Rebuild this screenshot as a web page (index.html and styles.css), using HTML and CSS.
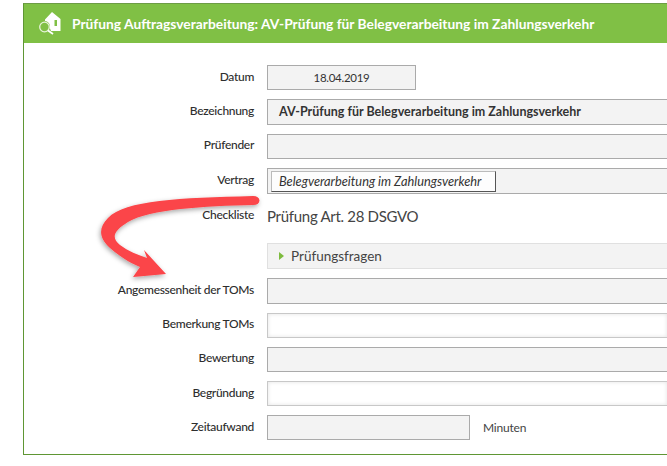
FILE: index.html
```html
<!DOCTYPE html>
<html lang="de">
<head>
<meta charset="utf-8">
<title>Prüfung Auftragsverarbeitung</title>
<link rel="stylesheet" href="styles.css">
</head>
<body>
<div class="panel">
  <header class="head">
    <svg class="logo" width="24" height="27" viewBox="38 10 24 27">
      <path fill="#fff" d="M52 12 L60.500 19 V31 H51 L50 28.500 C50.500 24 48.500 21.500 45 21 V19.500 Z"/>
      <rect x="54.500" y="20" width="2.500" height="6" fill="#80c045"/>
      <circle cx="44.500" cy="27" r="4.800" fill="none" stroke="#e6f3d8" stroke-width="1.300"/>
      <path d="M48 30.500 L53 34" stroke="#fff" stroke-width="1.800"/>
    </svg>
    <h1 class="title">Prüfung Auftragsverarbeitung: AV-Prüfung für Belegverarbeitung im Zahlungsverkehr</h1>
  </header>
  <div class="form">
    <div class="row r-datum"><label class="lbl">Datum</label><div class="box short center">18.04.2019</div></div>
    <div class="row r-bez"><label class="lbl">Bezeichnung</label><div class="box wide bold h26">AV-Prüfung für Belegverarbeitung im Zahlungsverkehr</div></div>
    <div class="row r-pr"><label class="lbl lift">Prüfender</label><div class="box wide"></div></div>
    <div class="row r-ver"><label class="lbl">Vertrag</label><div class="box wide tall"><span class="tag">Belegverarbeitung im Zahlungsverkehr</span></div></div>
    <div class="row r-che"><label class="lbl">Checkliste</label><div class="big">Prüfung Art. 28 DSGVO</div></div>
    <div class="row r-fra"><span class="lbl"></span><div class="acc"><span class="tri"></span>Prüfungsfragen</div></div>
    <div class="row r-ang"><label class="lbl">Angemessenheit der TOMs</label><div class="box wide h26"></div></div>
    <div class="row r-bem"><label class="lbl lift">Bemerkung TOMs</label><div class="box wide white"></div></div>
    <div class="row r-bew"><label class="lbl lift">Bewertung</label><div class="box wide"></div></div>
    <div class="row r-beg"><label class="lbl">Begründung</label><div class="box wide white"></div></div>
    <div class="row r-zei"><label class="lbl">Zeitaufwand</label><div class="box mid"></div><span class="unit">Minuten</span></div>
  </div>
</div>
<svg class="arrow" width="190" height="100" viewBox="90 190 190 100">
  <defs><filter id="sh" x="-20%" y="-20%" width="140%" height="150%"><feDropShadow dx="-1" dy="2" stdDeviation="2.500" flood-color="#000" flood-opacity=".35"/></filter></defs>
  <path filter="url(#sh)" fill="#fb4448" d="M253 196 Q259 196 259.500 200.500 Q259 205 253 205 C205 206 150 209 128 222 C115 230 110 237 120 245 C128 251 138 255 147 258 L144 250 L166 274 L133 277 L140 267 C128 262 118 255 110 248 C99 238 98 228 108 218 C125 200 180 198 253 196 Z"/>
</svg>
</body>
</html>
```
FILE: styles.css
```css
html, body { margin: 0; padding: 0; background: #fff; overflow: hidden; }
body { width: 667px; height: 466px; position: relative; font-family: Lato, sans-serif; color: #333; }
.panel { margin: 3px 0 0 23px; height: 452px; border: 1px solid #5f9634; border-right: 0; border-top-color: #6d9c45; box-sizing: border-box; }
.head { height: 39px; background: #80c045; display: flex; align-items: center; padding-left: 14px; gap: 10px; }
.logo { flex: none; }
.title { margin: 0; font-size: 13.800px; font-weight: 700; color: #fff; white-space: nowrap; }
.form { padding-top: 22px; }
.row { display: flex; align-items: flex-start; margin-bottom: 9px; }
.lbl { width: 230px; flex: none; margin-right: 13px; text-align: right; font-size: 12px; font-weight: 500; line-height: 16px; padding-top: 4px; letter-spacing: -.3px; color: #2e2e2e; }
.lift { padding-top: 3px; }
.box { box-sizing: border-box; height: 25px; border: 1px solid #aaa; background: #f3f3f3; font-size: 11.500px; line-height: 24px; color: #333; letter-spacing: -.3px; }
.h26 { height: 26px; }
.wide { flex: 1; border-right: 0; }
.short { width: 149px; flex: none; }
.mid { width: 203px; flex: none; }
.center { text-align: center; }
.bold { font-weight: 700; font-size: 12.500px; padding-left: 11px; letter-spacing: 0; }
.tall { height: 26px; padding: 2px 0 0 3px; line-height: 16px; }
.white { background: #fff; border-color: #c8c8c8; box-shadow: inset 0 0 4px #e4e4e4; }
.tag { display: block; box-sizing: border-box; height: 21px; width: 225px; border: 1px solid #bbb; border-right-color: #555; border-bottom-color: #555; background: #fdfdfd; font-style: italic; font-size: 12.800px; letter-spacing: 0; line-height: 19px; padding-left: 7px; white-space: nowrap; }
.big { font-size: 15px; line-height: 20px; color: #444; padding-top: 3px; letter-spacing: -.3px; }
.acc { flex: 1; box-sizing: border-box; height: 26px; background: #f3f3f3; border: 1px solid #e0e0e0; border-right: 0; font-size: 13.500px; color: #444; display: flex; align-items: center; gap: 7px; padding-left: 11px; }
.tri { width: 0; height: 0; border-left: 5px solid #7dbb3e; border-top: 4px solid transparent; border-bottom: 4px solid transparent; }
.unit { font-size: 12px; letter-spacing: -.2px; color: #444; margin-left: 13px; line-height: 25px; }
.r-che { height: 40px; margin-bottom: 0; }
.arrow { position: absolute; left: 90px; top: 190px; }
```
